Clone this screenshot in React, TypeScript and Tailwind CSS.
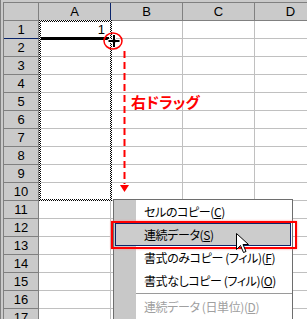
import React from "react";

const cols = ["A", "B", "C", "D"];
const rows = Array.from({ length: 17 }, (_, i) => i + 1);

function Sheet() {
  return (
    <div className="mt-[2px] ml-[2px] border-t border-l border-[#808080] flex flex-col">
      {/* column headers */}
      <div className="flex h-[18px]">
        <div className="w-[35px] shrink-0 bg-[#cacaca] border-r border-b border-[#808080]" />
        {cols.map((c) => (
          <div
            key={c}
            className={`w-[72px] shrink-0 bg-[#cacaca] border-b border-[#808080] flex items-center justify-center text-[13px] text-black ${
              c === "A" ? "border-r border-r-[#0a246a]" : "border-r"
            }`}
          >
            {c}
          </div>
        ))}
      </div>
      {rows.map((r) => (
        <div key={r} className="flex h-[18px]">
          <div
            className={`w-[35px] shrink-0 bg-[#cacaca] border-r border-b border-[#808080] flex items-center justify-center text-[13px] text-black ${
              r === 1 ? "border-b-[#0a246a]" : ""
            }`}
          >
            {r}
          </div>
          {cols.map((c) => (
            <div
              key={c}
              className="w-[72px] shrink-0 bg-white border-r border-b border-[#c0c0c0] flex items-center justify-end pr-[5px] text-[13px] text-black"
            >
              {c === "A" && r === 1 ? "1" : ""}
            </div>
          ))}
        </div>
      ))}
    </div>
  );
}

function Item({ label, k }: { label: string; k: string }) {
  return (
    <div className="h-[23px] flex items-center pl-[30px] whitespace-nowrap">
      {label}(<span className="underline">{k}</span>)
    </div>
  );
}

export default function App() {
  return (
    <div className="relative w-[307px] h-[319px] overflow-hidden bg-[#cacaca] border-l border-[#808080] font-['Liberation_Sans',sans-serif]">
      <Sheet />

      {/* copy marquee around A1:A10 (checkered 2px) */}
      <svg className="absolute left-[38px] top-[20px]" width="73" height="181" shapeRendering="crispEdges">
        <defs>
          <pattern id="chk" width="2" height="2" patternUnits="userSpaceOnUse">
            <rect x="0" y="0" width="2" height="2" fill="#fff" />
            <rect x="0" y="0" width="1" height="1" fill="#000" />
            <rect x="1" y="1" width="1" height="1" fill="#000" />
          </pattern>
        </defs>
        <rect x="0" y="0" width="2" height="181" fill="url(#chk)" />
        <rect x="71" y="0" width="2" height="181" fill="url(#chk)" />
        <rect x="0" y="0" width="73" height="2" fill="url(#chk)" />
        <rect x="0" y="179" width="73" height="2" fill="url(#chk)" />
      </svg>

      {/* active cell bottom edge */}
      <div className="absolute left-[40px] top-[37px] w-[68px] h-[3px] bg-black" />

      {/* fill handle cursor + red circle + dashed arrow */}
      <svg className="absolute left-0 top-0" width="307" height="319">
        <path d="M107 39.5h4.5v-5h3v5h4.5v3h-4.5v5h-3v-5h-4.5z" fill="#000" stroke="#fff" strokeWidth="1" />
        <ellipse cx="112" cy="41" rx="9" ry="8" fill="none" stroke="#ff0000" strokeWidth="1.5" />
        <line x1="123.5" y1="51" x2="123.5" y2="184" stroke="#ff0000" strokeWidth="2" strokeDasharray="7 4" />
        <polygon points="119,185 128,185 123.5,192" fill="#ff0000" />
      </svg>

      <span className="absolute left-[130px] top-[94px] text-[15px] font-bold text-[#ff0000] leading-none font-['Noto_Sans_CJK_JP',sans-serif] [font-feature-settings:'palt']">
        右ドラッグ
      </span>

      {/* context menu */}
      <div className="absolute left-[112px] top-[199px] w-[180px] h-[130px] border border-[#6e6e6e] bg-[linear-gradient(to_right,#c8c8c8_22px,#ffffff_22px)] text-[12px] tracking-[-0.4px] text-black font-['Noto_Sans_CJK_JP',sans-serif] [font-feature-settings:'palt'] leading-none">
        <Item label="セルのコピー" k="C" />
        <div className="h-[23px] mx-[1px] border border-[#0a246a] bg-[#cccccc] flex items-center pl-[28px] whitespace-nowrap">
          連続データ(<span className="underline">S</span>)
        </div>
        <Item label="書式のみコピー (フィル)" k="F" />
        <Item label="書式なしコピー (フィル)" k="O" />
        <div className="h-[3px] ml-[22px] flex items-center">
          <div className="w-full h-px bg-[#9a9a9a]" />
        </div>
        <div className="h-[23px] flex items-center pl-[30px] whitespace-nowrap text-[#a0a0a0]">
          連続データ (日単位)(<span className="underline">D</span>)
        </div>
      </div>

      {/* red highlight box */}
      <div className="absolute left-[110px] top-[221px] w-[186px] h-[28px] border-2 border-[#ff0000] shadow-[0_0_2px_#ff9090]" />

      {/* mouse pointer */}
      <svg className="absolute left-[235px] top-[233px]" width="14" height="22">
        <path d="M0.5 0.5v16l4-4 3 7 2.5-1-3-7h5.5z" fill="#fff" stroke="#000" strokeWidth="1" />
      </svg>
    </div>
  );
}
